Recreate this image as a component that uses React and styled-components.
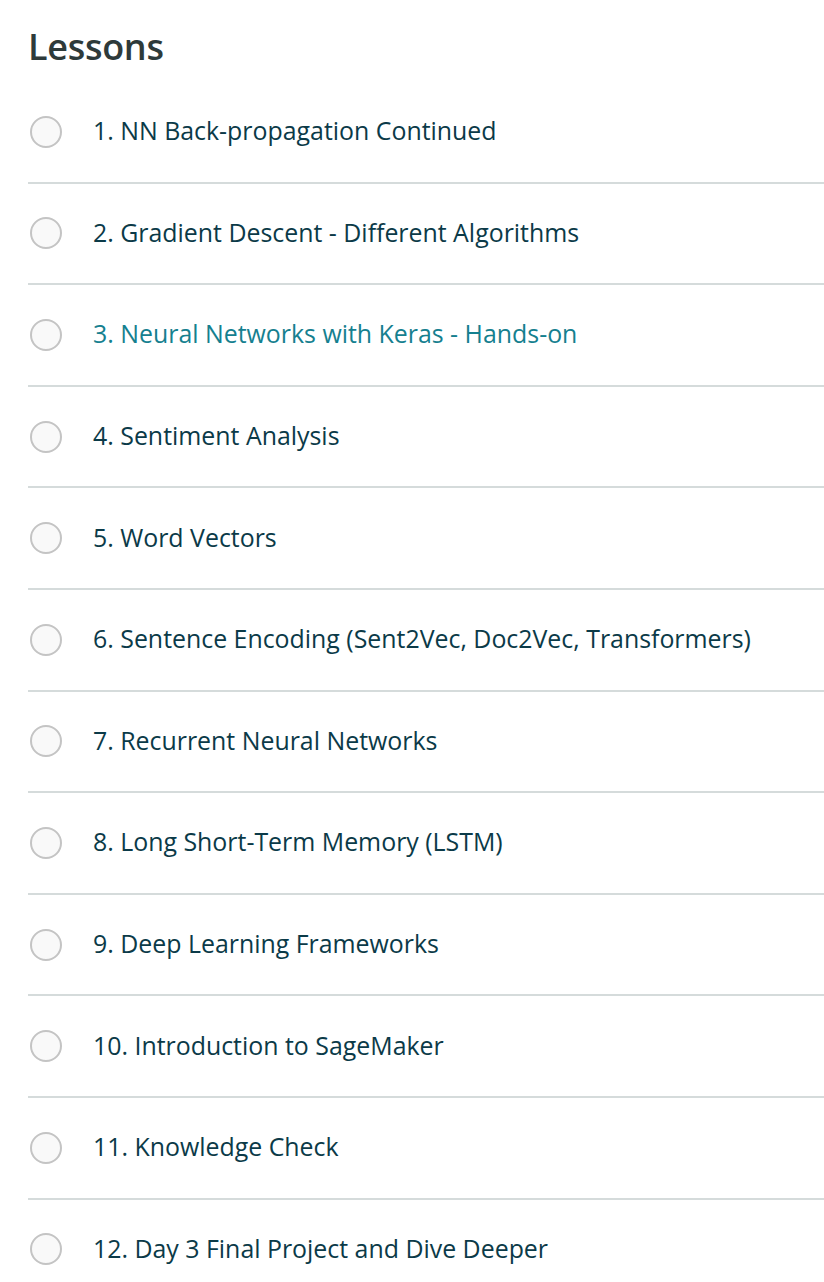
import React from 'react';
import styled, { createGlobalStyle } from 'styled-components';

const Global = createGlobalStyle`
  body {
    margin: 0;
    background: #fff;
    font-family: "Open Sans", "Noto Sans", sans-serif;
  }
`

const Page = styled.div`
  width: 824px;
  padding: 22px 0 0 28px;
  box-sizing: border-box;
`

const Heading = styled.h2`
  margin: 0;
  font-size: 36px;
  font-weight: 600;
  color: #2e3a3a;
  line-height: 50px;
  letter-spacing: -0.3px;
`

const List = styled.ul`
  list-style: none;
  margin: 10px 0 0;
  padding: 0;
`

const Item = styled.li`
  display: flex;
  align-items: center;
  height: 99.6px;
  border-bottom: 2px solid #d5dbdb;
  &:last-child {
    border-bottom: none;
  }
`

const Radio = styled.span`
  width: 28px;
  height: 28px;
  border-radius: 50%;
  border: 2px solid #c4c4c4;
  background: #f9f9f9;
  margin: 0 31px 0 2px;
  flex-shrink: 0;
`

const Label = styled.span`
  font-size: 24.9px;
  font-weight: 500;
  color: ${p => (p.active ? '#15808f' : '#0b3a48')};
  margin-top: -3px;
`

const lessons = [
  '1. NN Back-propagation Continued',
  '2. Gradient Descent - Different Algorithms',
  '3. Neural Networks with Keras - Hands-on',
  '4. Sentiment Analysis',
  '5. Word Vectors',
  '6. Sentence Encoding (Sent2Vec, Doc2Vec, Transformers)',
  '7. Recurrent Neural Networks',
  '8. Long Short-Term Memory (LSTM)',
  '9. Deep Learning Frameworks',
  '10. Introduction to SageMaker',
  '11. Knowledge Check',
  '12. Day 3 Final Project and Dive Deeper',
];

const App = () => {
  return (
    <Page>
      <Global />
      <Heading>Lessons</Heading>
      <List>
        {lessons.map((lesson, index) => (
          <Item key={index}>
            <Radio />
            <Label active={index === 2}>{lesson}</Label>
          </Item>
        ))}
      </List>
    </Page>
  );
}

export default App;
